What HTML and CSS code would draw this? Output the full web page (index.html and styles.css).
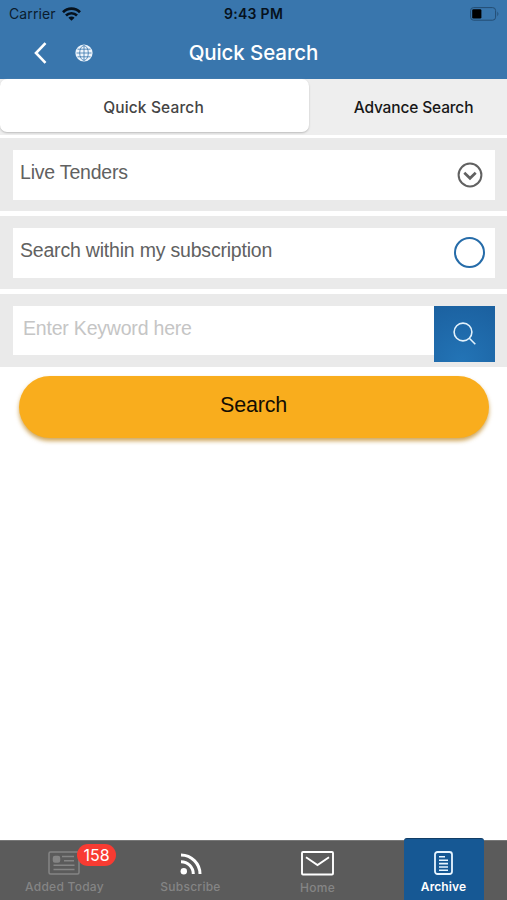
FILE: index.html
```html
<!DOCTYPE html>
<html lang="en">
<head>
<meta charset="utf-8">
<title>Quick Search</title>
<link rel="stylesheet" href="styles.css">
</head>
<body>
<div class="screen">
  <header class="header">
    <div class="status">
      <div class="carrier"><span>Carrier</span>
        <svg width="19" height="14" viewBox="0 0 19 14" fill="none" stroke="#06111c" stroke-width="2.7"><path d="M1 5.2a12 12 0 0 1 17 0M4 8.5a7.8 7.8 0 0 1 11 0"/><path d="M6.4 10.7a4.4 4.4 0 0 1 6.2 0L9.5 13.8z" fill="#06111c" stroke="none"/></svg>
      </div>
      <span class="time">9:43 PM</span>
      <svg class="battery" width="30" height="14" viewBox="0 0 30 14"><rect x=".6" y=".6" width="25" height="12.6" rx="3" fill="none" stroke="#244d73"/><rect x="2.2" y="2.3" width="9.2" height="9.2" rx="1.3" fill="#000"/><path d="M27.4 4.6q2 2.3 0 4.6z" fill="#244d73"/></svg>
    </div>
    <nav class="navbar">
      <div class="nav-icons">
        <svg width="13" height="22" viewBox="0 0 13 22" fill="none" stroke="#fff" stroke-width="2.6"><path d="M11.5 1.2 2 11l9.500 9.800"/></svg>
        <svg width="18" height="18" viewBox="0 0 18 18"><circle cx="9" cy="9" r="8.600" fill="#eef5fc"/><g fill="none" stroke="#3976ad" stroke-width=".8"><ellipse cx="9" cy="9" rx="4.300" ry="7.300"/><path d="M9 1.500v15M1.500 9h15M2.500 5.200h13M2.500 12.800h13"/></g></svg>
      </div>
      <h1>Quick Search</h1>
    </nav>
  </header>
  <div class="tabs">
    <div class="tab tab-on"><span>Quick Search</span></div>
    <div class="tab"><span>Advance Search</span></div>
  </div>
  <main>
    <section class="band">
      <div class="field"><span>Live Tenders</span>
        <svg width="26" height="26" viewBox="0 0 26 26" fill="none" stroke="#616161"><circle cx="13" cy="13" r="11.400" stroke-width="2"/><path d="m7.300 10.800 5.700 5.500 5.700-5.500" stroke-width="2.700"/></svg>
      </div>
    </section>
    <section class="band">
      <div class="field"><span>Search within my subscription</span><i class="radio"></i></div>
    </section>
    <section class="band band-search">
      <div class="field placeholder"><span>Enter Keyword here</span></div>
      <div class="go"><svg width="24" height="24" viewBox="0 0 24 24" fill="none" stroke="#e3f2fc" stroke-width="1.600"><circle cx="10" cy="10" r="8.900"/><path d="m16.300 16.300 6 6"/></svg></div>
    </section>
    <div class="submit"><span>Search</span></div>
  </main>
  <footer class="tabbar">
    <div class="item added">
      <svg width="32" height="24" viewBox="0 0 32 24" fill="none" stroke="#858585" stroke-width="1.500"><rect x="1" y="1" width="30" height="22" rx="1.500"/><rect x="5.500" y="5.500" width="6" height="5.500" rx="1.500" fill="#858585"/><path d="M14 5.500h12M16 9.800h10M5.500 14.300h21M5.500 18.500h21"/></svg>
      <span>Added Today</span><b class="badge">158</b>
    </div>
    <div class="item subscribe">
      <svg width="22" height="22" viewBox="0 0 22 22" fill="none" stroke="#fff" stroke-width="3"><circle cx="3.800" cy="18.200" r="3.200" fill="#fff" stroke="none"/><path d="M1 8.700A12.300 12.300 0 0 1 13.300 21M1 2a19 19 0 0 1 19 19"/></svg>
      <span>Subscribe</span>
    </div>
    <div class="item home">
      <svg width="33" height="25" viewBox="0 0 33 25" fill="none" stroke="#fff" stroke-width="1.900"><rect x="1" y="1" width="31" height="22.500" rx="1"/><path d="M5 6.200 16.500 14 28 6.200"/></svg>
      <span>Home</span>
    </div>
    <div class="item archive">
      <svg width="19" height="24" viewBox="0 0 19 24" fill="none" stroke="#e8f5ff" stroke-width="1.800"><rect x="1" y="1" width="17" height="22" rx="2.500"/><path d="M5 5.800h6M5 9.200h9M5 12.600h9M5 16h9M5 19.200h9" stroke-width="1.600"/></svg>
      <span>Archive</span>
    </div>
  </footer>
</div>
</body>
</html>
```

FILE: styles.css
```css
* { box-sizing: border-box; }
body { margin: 0; background: #fff; font-family: Inter, sans-serif; }
svg { display: block; flex: none; }
span { white-space: nowrap; }
.screen { width: 507px; height: 900px; display: flex; flex-direction: column; overflow: hidden; }
.header { height: 79px; background: #3976ad; }
.status { height: 27px; display: grid; grid-template-columns: 1fr auto 1fr; align-items: center; padding: 1px 7px 0 9px; font-size: 14px; line-height: 18px; color: #0b1c2d; }
.carrier { display: flex; align-items: center; gap: 6px; }
.carrier span { letter-spacing: .1px; }
.time { font-weight: 600; color: #06111c; letter-spacing: .3px; margin-right: 2px; }
.battery { justify-self: end; }
.navbar { height: 52px; display: grid; grid-template-columns: 1fr auto 1fr; align-items: center; }
.nav-icons { display: flex; align-items: center; gap: 28px; padding-left: 34px; }
h1 { margin: 0; font-size: 20.5px; line-height: 24px; font-weight: 500; color: #fff; letter-spacing: -.1px; }
.tabs { height: 56px; display: flex; background: #eee; }
.tab { flex: 1; display: flex; align-items: center; justify-content: center; padding-left: 11px; font-size: 15.5px; font-weight: 500; color: #171717; letter-spacing: -.15px; }
.tab-on { flex: 0 0 309px; height: 53px; padding: 3px 2px 0 0; background: #fff; color: #444; letter-spacing: .15px; border-radius: 7px; box-shadow: 0 1px 2px #bbb; }
main { flex: 1; padding-top: 3px; font-family: "Liberation Sans", sans-serif; }
.band { height: 73px; margin-bottom: 5px; padding: 12px 12px 11px 13px; background: #eaeaea; }
.field { height: 50px; display: flex; align-items: center; justify-content: space-between; padding: 0 12px 0 7px; background: #fff; color: #616161; font-size: 19.5px; line-height: 22px; letter-spacing: -.2px; }
.field span { margin-bottom: 7px; }
.field .radio { width: 31px; height: 31px; margin: -1px -2px 0 0; border: 2px solid #266ca9; border-radius: 50%; }
.band-search { display: flex; margin-bottom: 9px; }
.placeholder { flex: 1; height: 49px; padding-left: 10px; color: #c5c5c5; }
.placeholder span { margin-bottom: 6px; }
.go { width: 61px; height: 56px; display: flex; align-items: center; justify-content: center; background: radial-gradient(circle at 45% 100%, #2374b6, #1b609f); }
.submit { width: 470px; height: 62px; margin-left: 19px; padding: 0 1px 3px 0; display: flex; align-items: center; justify-content: center; border-radius: 31px; background: #f9ad1d; box-shadow: 0 3px 4px #bd8520b8; color: #130d03; font-size: 21.5px; letter-spacing: -.2px; }
.tabbar { height: 60px; display: flex; background: #5b5b5b; border-top: 1px solid #777; font-size: 12px; line-height: 14px; font-weight: 500; color: #858585; }
.item { width: 127px; display: flex; flex-direction: column; align-items: center; position: relative; letter-spacing: .25px; }
.item span { margin-top: auto; margin-bottom: 6px; }
.added svg { margin-top: 10px; }
.added span { margin-left: 2px; }
.subscribe svg { margin-top: 12px; }
.home svg { margin-top: 10px; }
.home span { margin-bottom: 5px; }
.badge { position: absolute; left: 77px; top: 3px; width: 39px; height: 22px; border-radius: 11px; background: #f83b32; color: #fff; font-size: 16px; line-height: 22px; font-weight: 400; text-align: center; letter-spacing: 0; }
.archive { width: 80px; height: 62px; margin: -3px 0 0 22.5px; background: #165894; border-top: 1px solid #123d65; border-radius: 3px 3px 0 0; color: #fff; font-weight: 600; letter-spacing: .1px; }
.archive svg { margin-top: 12px; }
```
